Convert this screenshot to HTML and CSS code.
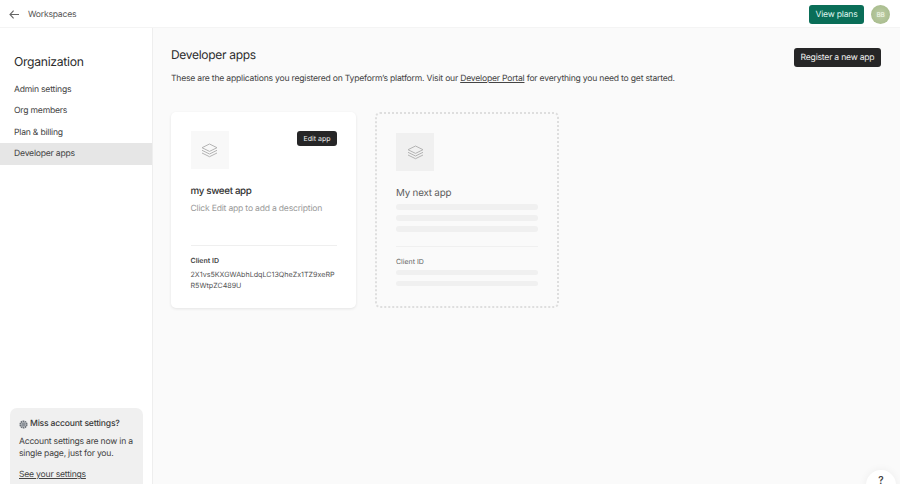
FILE: index.html
```html
<!DOCTYPE html>
<html lang="en">
<head>
<meta charset="utf-8">
<title>Developer apps</title>
<link rel="stylesheet" href="styles.css">
</head>
<body>
<div class="page">
  <header class="topbar">
    <div class="top-left">
      <svg class="back" width="10" height="9" viewBox="0 0 10 9" fill="none"><path d="M10 4.5H1M4.6 .7 1 4.5 4.6 8.3" stroke="#666" stroke-width="1.1"/></svg>
      <span>Workspaces</span>
    </div>
    <div class="top-right">
      <button class="btn green">View plans</button>
      <div class="avatar">BB</div>
    </div>
  </header>
  <div class="body">
    <aside class="sidebar">
      <h2 class="org">Organization</h2>
      <nav class="nav">
        <a>Admin settings</a>
        <a>Org members</a>
        <a>Plan &amp; billing</a>
        <a class="active">Developer apps</a>
      </nav>
      <div class="notice">
        <div class="notice-title"><svg class="gear" width="9" height="9" viewBox="0 0 10 10"><circle cx="5" cy="5" r="3.4" fill="none" stroke="#6a7078" stroke-width="2.2" stroke-dasharray="1.6 .5"/><circle cx="5" cy="5" r="2.2" fill="#8d939a"/></svg>Miss account settings?</div>
        <p>Account settings are now in a single page, just for you.</p>
        <a class="notice-link">See your settings</a>
      </div>
    </aside>
    <main class="main">
      <div class="head">
        <div>
          <h1>Developer apps</h1>
          <p class="intro">These are the applications you registered on Typeform’s platform. Visit our <u>Developer Portal</u> for everything you need to get started.</p>
        </div>
        <button class="btn dark">Register a new app</button>
      </div>
      <div class="cards">
        <section class="card">
          <div class="card-top">
            <div class="tile"><svg width="17" height="15" viewBox="0 0 17 15" fill="none" stroke="#b4b4b4" stroke-width="1"><path d="M8.5 1 16 4.7 8.5 8.4 1 4.7Z"/><path d="M1 7.3 8.5 11 16 7.3"/><path d="M1 10 8.5 13.7 16 10"/></svg></div>
            <button class="edit">Edit app</button>
          </div>
          <h3>my sweet app</h3>
          <p class="desc">Click Edit app to add a description</p>
          <div class="rule"></div>
          <div class="cid-label">Client ID</div>
          <div class="cid">2X1vs5KXGWAbhLdqLC13QheZx1TZ9xeRP<br>R5WtpZC489U</div>
        </section>
        <section class="ghost">
          <div class="tile dim"><svg width="17" height="15" viewBox="0 0 17 15" fill="none" stroke="#b4b4b4" stroke-width="1"><path d="M8.5 1 16 4.7 8.5 8.4 1 4.7Z"/><path d="M1 7.3 8.5 11 16 7.3"/><path d="M1 10 8.5 13.7 16 10"/></svg></div>
          <h3>My next app</h3>
          <div class="bars"><i></i><i></i><i></i></div>
          <div class="rule"></div>
          <div class="ghost-label">Client ID</div>
          <div class="bars"><i></i><i></i></div>
        </section>
      </div>
    </main>
  </div>
  <button class="help">?</button>
</div>
</body>
</html>
```
FILE: styles.css
```css
* { box-sizing: border-box; }
html, body { margin: 0; height: 100%; }
body { font-family: Inter, "Liberation Sans", sans-serif; text-rendering: geometricPrecision; letter-spacing: -.013em; color: #3a3a3a; background: #fff; overflow: hidden; }
.page { position: relative; width: 900px; height: 484px; display: flex; flex-direction: column; overflow: hidden; }
.topbar { height: 28px; flex: none; display: flex; justify-content: space-between; align-items: flex-start; padding: 5px 10px 0 9px; background: #fff; border-bottom: 1px solid #f4f4f4; }
.top-left { display: flex; align-items: center; gap: 9px; height: 19px; font-size: 8.6px; color: #555; letter-spacing: -.025em; }
.back { flex: none; }
.top-right { display: flex; gap: 7px; align-items: center; }
.btn { border: 0; border-radius: 3px; font: 8.6px Inter, "Liberation Sans", sans-serif; text-rendering: geometricPrecision; letter-spacing: -.025em; white-space: nowrap; padding: 0; height: 19px; }
.green { background: #0a6e58; color: #dff4ee; width: 55px; }
.dark { background: #262627; color: #eee; width: 87px; margin-top: 1px; }
.avatar { width: 19px; height: 19px; border-radius: 50%; background: radial-gradient(circle, #bccca6, #a3b886); color: #e8f0dd; font-size: 6.5px; font-weight: 600; display: flex; align-items: center; justify-content: center; }
.body { flex: 1; display: flex; min-height: 0; }
.sidebar { width: 153px; flex: none; background: #fff; border-right: 1px solid #eeeeee; display: flex; flex-direction: column; padding-top: 25px; }
.org { margin: 0 0 9px 14px; font-size: 12.2px; line-height: 17px; font-weight: 400; color: #2c2c2c; letter-spacing: -.025em; }
.nav { display: flex; flex-direction: column; }
.nav a { height: 21.4px; padding-left: 14px; font-size: 8.6px; line-height: 22px; color: #444; }
.nav a.active { background: #e6e6e6; }
.notice { margin: auto 9px 0 10px; height: 76px; background: #f0f0f0; border-radius: 7px 7px 0 0; padding: 10px 9px 0; font-size: 8.6px; line-height: 12px; color: #444; }
.notice-title { display: flex; align-items: center; gap: 2px; font-weight: 500; color: #3a3a3a; }
.notice p { margin: 6px 0 0; }
.notice-link { display: block; margin-top: 9px; text-decoration: underline; }
.main { flex: 1; background: #fafafa; padding: 19px 19px 0 18px; }
.head { display: flex; justify-content: space-between; align-items: flex-start; }
h1 { margin: 0; font-size: 12px; line-height: 16px; font-weight: 400; color: #2c2c2c; letter-spacing: -.025em; }
.intro { margin: 10px 0 0; font-size: 8.6px; line-height: 12px; color: #444; white-space: nowrap; }
.cards { display: flex; gap: 19px; margin-top: 27px; }
.card { width: 185px; height: 196px; background: #fff; border-radius: 5px; box-shadow: 0 1px 3px rgba(0,0,0,.09); padding: 19px 19px 0 19.5px; }
.card-top { display: flex; justify-content: space-between; align-items: flex-start; }
.tile { width: 38px; height: 38px; background: #f8f8f8; display: flex; align-items: center; justify-content: center; }
.tile.dim { background: #f0f0f0; }
.edit { border: 0; width: 40px; height: 15px; padding: 0; border-radius: 3px; background: #262627; color: #eee; font: 7px Inter, "Liberation Sans", sans-serif; text-rendering: geometricPrecision; }
h3 { margin: 0; font-weight: 400; font-size: 9.8px; line-height: 14px; letter-spacing: -.02em; }
.card h3 { margin-top: 16px; color: #333; font-weight: 500; letter-spacing: -.035em; }
.desc { margin: 4px 0 0; font-size: 8.6px; line-height: 12px; color: #9a9a9a; }
.card .rule { margin-top: 30px; height: 1px; background: #efefef; }
.cid-label { margin-top: 10px; font-size: 7px; line-height: 10px; font-weight: 600; color: #444; letter-spacing: 0; }
.cid { margin-top: 2.5px; font-size: 7.15px; line-height: 11px; color: #555; white-space: nowrap; letter-spacing: 0; }
.ghost { width: 184px; height: 196px; border: 2px dotted #dedede; border-radius: 5px; padding: 19px 19px 0 19px; }
.ghost h3 { margin-top: 16px; color: #5c5c5c; }
.bars { display: flex; flex-direction: column; gap: 5.5px; margin-top: 3px; }
.bars i { height: 5.5px; border-radius: 3px; background: #f0f0f0; }
.ghost .rule { margin-top: 14px; height: 1px; background: #f0f0f0; }
.ghost-label { margin: 10px 0 2px; font-size: 7px; line-height: 10px; color: #666; letter-spacing: 0; }
.help { position: absolute; right: 4px; top: 470px; width: 30px; height: 30px; border: 0; border-radius: 50%; background: #fff; box-shadow: 0 0 8px rgba(0,0,0,.06); color: #444; font: 600 10px Inter, "Liberation Sans", sans-serif; padding: 0 0 11px; display: flex; align-items: center; justify-content: center; }
```
